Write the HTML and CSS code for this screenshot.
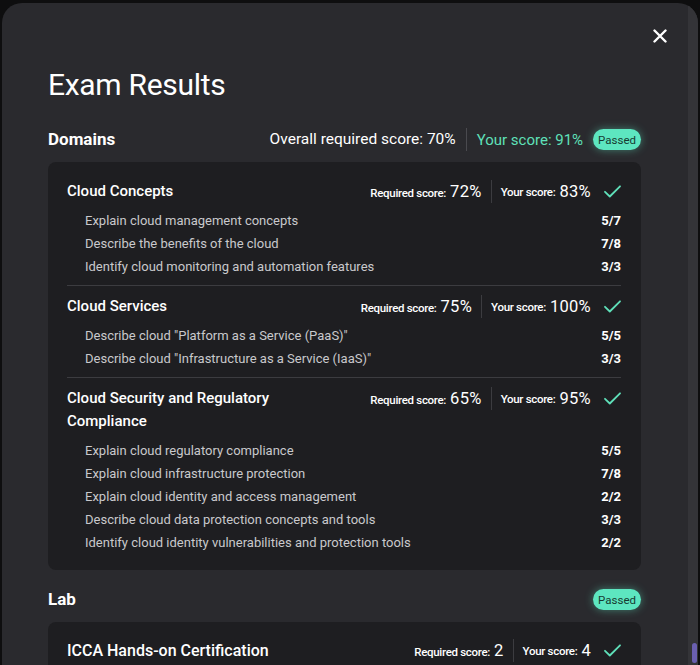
FILE: index.html
```html
<!DOCTYPE html>
<html>
<head>
<meta charset="utf-8">
<link rel="stylesheet" href="styles.css">
</head>
<body>
<div class="modal">
  <div class="content">
    <button class="close" aria-label="Close">
      <svg width="14" height="14" viewBox="0 0 14 14"><path d="M1.5 1.5 L12.5 12.5 M12.5 1.5 L1.5 12.5" stroke="#fff" stroke-width="2.4" stroke-linecap="round"/></svg>
    </button>
    <h1 class="title">Exam Results</h1>

    <div class="section-head">
      <h2 class="section-title">Domains</h2>
      <div class="overall">
        <span class="overall-req">Overall required score: 70%</span>
        <span class="overall-your">Your score: 91%</span>
        <span class="pill">Passed</span>
      </div>
    </div>

    <div class="card">
      <div class="group">
        <div class="group-head">
          <div class="group-title">Cloud Concepts</div>
          <div class="scores">
            <span class="score"><span class="lbl">Required score:</span><span class="val">72%</span></span>
            <span class="score sep"><span class="lbl">Your score:</span><span class="val">83%</span></span>
            <svg class="check" width="17" height="13" viewBox="0 0 17 13"><path d="M1 6.8 L5.8 11.5 L16 1.3" fill="none" stroke="#5fe0b9" stroke-width="1.8" stroke-linecap="round" stroke-linejoin="round"/></svg>
          </div>
        </div>
        <div class="item"><span>Explain cloud management concepts</span><span class="frac">5/7</span></div>
        <div class="item"><span>Describe the benefits of the cloud</span><span class="frac">7/8</span></div>
        <div class="item"><span>Identify cloud monitoring and automation features</span><span class="frac">3/3</span></div>
      </div>

      <div class="group">
        <div class="group-head">
          <div class="group-title">Cloud Services</div>
          <div class="scores">
            <span class="score"><span class="lbl">Required score:</span><span class="val">75%</span></span>
            <span class="score sep"><span class="lbl">Your score:</span><span class="val">100%</span></span>
            <svg class="check" width="17" height="13" viewBox="0 0 17 13"><path d="M1 6.8 L5.8 11.5 L16 1.3" fill="none" stroke="#5fe0b9" stroke-width="1.8" stroke-linecap="round" stroke-linejoin="round"/></svg>
          </div>
        </div>
        <div class="item"><span>Describe cloud "Platform as a Service (PaaS)"</span><span class="frac">5/5</span></div>
        <div class="item"><span>Describe cloud "Infrastructure as a Service (IaaS)"</span><span class="frac">3/3</span></div>
      </div>

      <div class="group">
        <div class="group-head">
          <div class="group-title">Cloud Security and Regulatory Compliance</div>
          <div class="scores">
            <span class="score"><span class="lbl">Required score:</span><span class="val">65%</span></span>
            <span class="score sep"><span class="lbl">Your score:</span><span class="val">95%</span></span>
            <svg class="check" width="17" height="13" viewBox="0 0 17 13"><path d="M1 6.8 L5.8 11.5 L16 1.3" fill="none" stroke="#5fe0b9" stroke-width="1.8" stroke-linecap="round" stroke-linejoin="round"/></svg>
          </div>
        </div>
        <div class="item"><span>Explain cloud regulatory compliance</span><span class="frac">5/5</span></div>
        <div class="item"><span>Explain cloud infrastructure protection</span><span class="frac">7/8</span></div>
        <div class="item"><span>Explain cloud identity and access management</span><span class="frac">2/2</span></div>
        <div class="item"><span>Describe cloud data protection concepts and tools</span><span class="frac">3/3</span></div>
        <div class="item"><span>Identify cloud identity vulnerabilities and protection tools</span><span class="frac">2/2</span></div>
      </div>
    </div>

    <div class="section-head lab-head">
      <h2 class="section-title">Lab</h2>
      <div class="overall">
        <span class="pill">Passed</span>
      </div>
    </div>

    <div class="card lab-card">
      <div class="group">
        <div class="group-head">
          <div class="group-title">ICCA Hands-on Certification</div>
          <div class="scores">
            <span class="score"><span class="lbl">Required score:</span><span class="val">2</span></span>
            <span class="score sep"><span class="lbl">Your score:</span><span class="val">4</span></span>
            <svg class="check" width="17" height="13" viewBox="0 0 17 13"><path d="M1 6.8 L5.8 11.5 L16 1.3" fill="none" stroke="#5fe0b9" stroke-width="1.8" stroke-linecap="round" stroke-linejoin="round"/></svg>
          </div>
        </div>
      </div>
    </div>
  </div>
  <div class="scrollbar"><div class="thumb"></div></div>
</div>
</body>
</html>
```

FILE: styles.css
```css
html, body {
  margin: 0;
  padding: 0;
  background: #0e0e0f;
  overflow: hidden;
}
body {
  font-family: Roboto, "Liberation Sans", sans-serif;
  color: #ffffff;
  padding: 3px 0 0 2px;
  height: 665px;
  box-sizing: border-box;
}
.modal {
  position: relative;
  width: 696px;
  height: 700px;
  background: #2a2a2e;
  border-radius: 20px;
  display: flex;
  overflow: hidden;
}
.content {
  flex: 1;
  padding: 0 47px 0 46px;
}
.scrollbar {
  width: 10px;
  background: #343438;
  position: relative;
}
.thumb {
  position: absolute;
  left: 4px;
  top: 640px;
  width: 5px;
  height: 20px;
  background: #6a5fb0;
  border-radius: 3px;
}
.close {
  position: absolute;
  top: 26px;
  right: 31px;
  width: 14px;
  height: 14px;
  padding: 0;
  border: 0;
  background: none;
  display: flex;
}
.title {
  margin: 0;
  padding-top: 64px;
  font-size: 30px;
  font-weight: 400;
  line-height: 36px;
  letter-spacing: -0.3px;
}
.section-head {
  display: flex;
  align-items: center;
  justify-content: space-between;
  margin-top: 25px;
  height: 23px;
}
.section-title {
  margin: 0;
  font-size: 17px;
  font-weight: 700;
  line-height: 23px;
}
.overall {
  display: flex;
  align-items: center;
  font-size: 15.5px;
}
.overall-req {
  padding-right: 10px;
  border-right: 1px solid #4a4a4f;
  line-height: 23px;
}
.overall-your {
  color: #5fe0b9;
  padding-left: 10px;
  margin-right: 10px;
  font-size: 15px;
  font-weight: 400;
}
.pill {
  display: inline-flex;
  align-items: center;
  height: 21px;
  padding: 0 5px;
  border-radius: 11px;
  background: #5de6c0;
  color: #173a30;
  font-size: 11.5px;
  box-shadow: 0 0 8px rgba(93, 230, 192, 0.45);
}
.card {
  margin-top: 11px;
  background: #1e1e21;
  border-radius: 8px;
  padding: 18px 20px 16px 19px;
}
.group + .group {
  border-top: 1px solid #3c3c40;
  margin-top: 7px;
  padding-top: 9px;
}
.group-head {
  display: flex;
  align-items: flex-start;
  justify-content: space-between;
  gap: 20px;
  margin-bottom: 6px;
}
.group-title {
  font-size: 15px;
  line-height: 23px;
  font-weight: 500;
}
.scores {
  display: flex;
  align-items: center;
  flex-shrink: 0;
  height: 23px;
}
.score {
  display: flex;
  align-items: baseline;
  gap: 4px;
  padding-right: 9px;
}
.score.sep {
  border-left: 1px solid #3c3c40;
  padding-left: 9px;
  padding-right: 13px;
  height: 23px;
  align-items: center;
}
.lbl {
  font-size: 11.5px;
  font-weight: 500;
  letter-spacing: -0.3px;
}
.val {
  font-size: 16.5px;
  font-weight: 400;
  letter-spacing: 0.3px;
}
.check {
  display: block;
}
.item {
  display: flex;
  justify-content: space-between;
  padding-left: 18px;
  font-size: 13px;
  line-height: 23px;
  color: #c9c9cc;
}
.frac {
  color: #ffffff;
  font-weight: 700;
}
.lab-head {
  margin-top: 18px;
}
.lab-card {
  margin-top: 11px;
  padding-top: 17px;
}
.lab-card .group-title {
  font-size: 16px;
}
```
